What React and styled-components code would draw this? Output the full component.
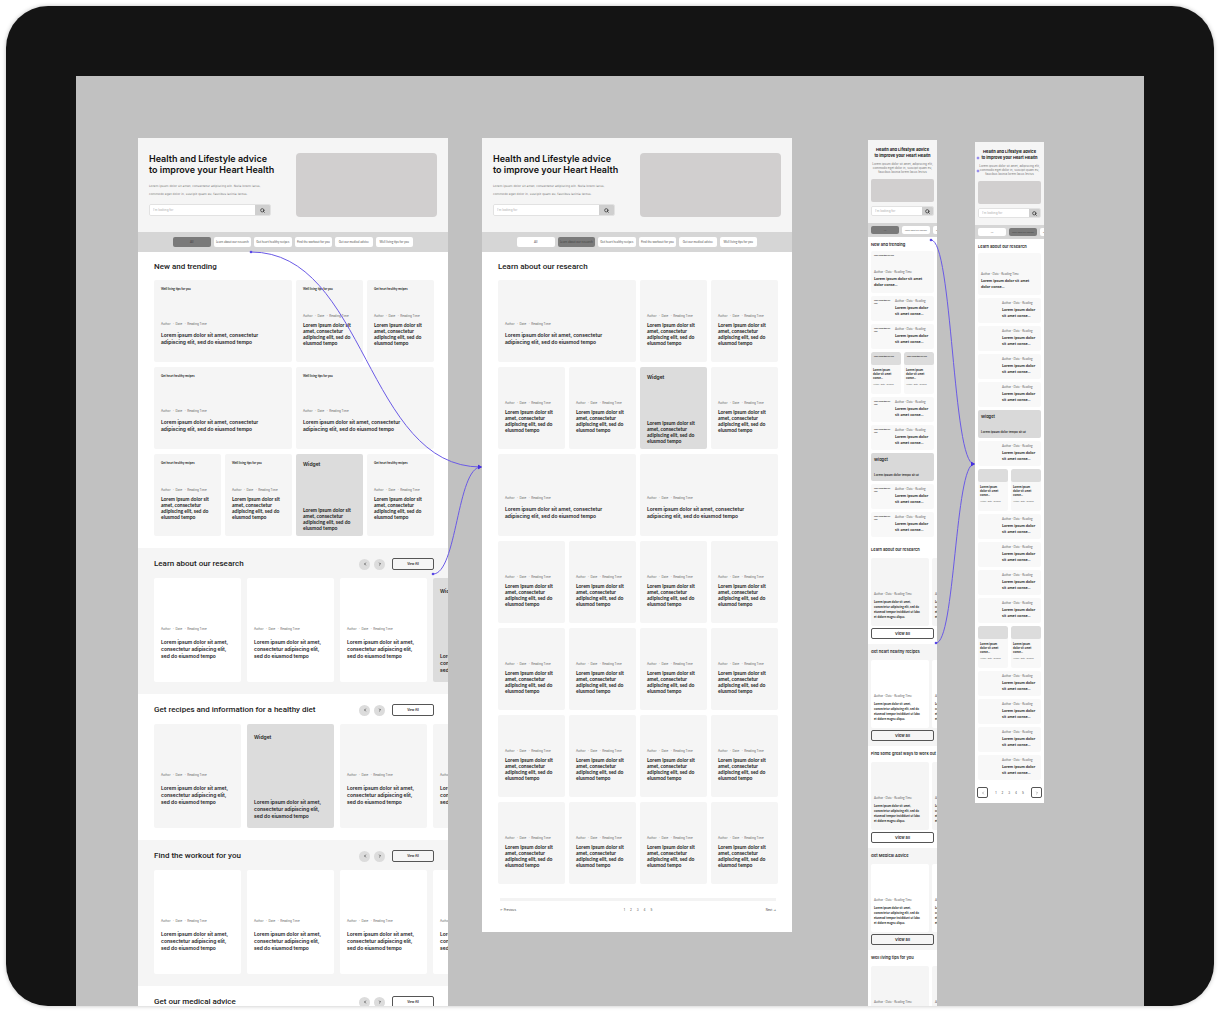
import { Fragment } from 'react'
import styled, { createGlobalStyle } from 'styled-components'
import { Search, ChevronLeft, ChevronRight } from 'lucide-react'

const GlobalStyle = createGlobalStyle`
    * {
        box-sizing: border-box;
    }

    body {
        margin: 0;
        background-color: #ffffff;
        font-family: Inter, "Liberation Sans", sans-serif;
        color: #1b1b1b;
    }

    h1, h2, h3, p {
        margin: 0;
    }

    button, input {
        font-family: inherit;
        color: inherit;
        margin: 0;
        padding: 0;
        border: 0;
    }
`

const Device = styled.div`
    height: calc(100vh - 12px);
    margin: 6px;
    padding: 70px 70px 0;
    background-color: #141414;
    border-radius: 42px;
    box-shadow: 0 0 4px rgba(0, 0, 0, 0.25);
    overflow: hidden;
`

const Canvas = styled.main`
    position: relative;
    height: 100%;
    background-color: #c1c1c1;
    overflow: hidden;
`

const Artboard = styled.article`
    position: absolute;
    left: ${props => props.$x}px;
    top: ${props => props.$y}px;
    width: ${props => props.$mobile ? 69 : 310}px;
    background-color: #ffffff;
    overflow: hidden;
`

const Connectors = styled.svg`
    position: absolute;
    inset: 0;
    width: 100%;
    height: 100%;
    pointer-events: none;
`

/* hero */

const Hero = styled.header`
    display: flex;
    justify-content: space-between;
    align-items: flex-start;
    padding: 15px 11px;
    background-color: #f5f5f5;
`

const MobileHero = styled.header`
    display: flex;
    flex-direction: column;
    padding: 7px 3px;
    text-align: center;
    background-color: #f5f5f5;
`

const HeroTitle = styled.h1`
    font-size: ${props => props.$mobile ? 4 : 9}px;
    line-height: ${props => props.$mobile ? 6 : 11}px;
    font-weight: ${props => props.$mobile ? 700 : 600};
    color: #111111;
    white-space: pre;
`

const HeroText = styled.p`
    margin: ${props => props.$mobile ? '3px 0 5px' : '7px 0 6px'};
    font-family: ${props => props.$mobile ? 'Inter' : '"DejaVu Sans"'}, sans-serif;
    font-size: 3px;
    line-height: ${props => props.$mobile ? 4 : 8}px;
    color: #777777;
    white-space: pre;
`

const HeroImage = styled.div`
    width: ${props => props.$mobile ? 'auto' : '141px'};
    height: ${props => props.$mobile ? 23 : 64}px;
    border-radius: ${props => props.$mobile ? 2 : 4}px;
    background-color: #d1cfcf;
`

const SearchForm = styled.form`
    display: flex;
    width: ${props => props.$mobile ? 'auto' : '122px'};
    height: ${props => props.$mobile ? 10 : 12}px;
    margin-top: ${props => props.$mobile ? 4 : 0}px;
    border: 1px solid #e2e2e2;
    border-radius: 2px;
    overflow: hidden;
`

const SearchInput = styled.input`
    flex: 1;
    min-width: 0;
    padding-left: 3px;
    background-color: #ffffff;
    font-size: 3px;

    &::placeholder {
        color: #aaaaaa;
    }
`

const SearchButton = styled.button`
    display: flex;
    align-items: center;
    justify-content: center;
    width: ${props => props.$mobile ? 11 : 15}px;
    background-color: #cfcfcf;
`

/* tabs */

const TabBar = styled.nav`
    display: flex;
    gap: 3px;
    padding: ${props => props.$mobile ? '3px' : '5px 35px'};
    background-color: #d6d6d6;
`

const Tab = styled.button`
    flex: ${props => props.$mobile ? '0 0 28px' : '1 1 0'};
    min-width: 0;
    height: ${props => props.$mobile ? 8 : 10}px;
    border-radius: 2px;
    background-color: ${props => props.$active ? '#7a7a7a' : '#ffffff'};
    color: ${props => props.$active ? '#444444' : '#555555'};
    font-family: Lato, sans-serif;
    font-size: ${props => props.$mobile ? 2 : 3}px;
    white-space: nowrap;
    overflow: hidden;
`

/* sections */

const Section = styled.section`
    padding: 10px 14px 12px 16px;
    background-color: ${props => props.$shaded ? '#f5f5f5' : '#ffffff'};
`

const MobileSection = styled.section`
    padding: 5px 3px;
    background-color: ${props => props.$shaded ? '#f5f5f5' : '#ffffff'};
`

const SectionHead = styled.div`
    display: flex;
    align-items: center;
    gap: 4px;
    height: 12px;
    margin-bottom: 8px;
`

const SectionTitle = styled.h2`
    flex: 1;
    font-family: ${props => props.$mobile ? 'Inter' : 'Roboto'}, sans-serif;
    font-size: ${props => props.$mobile ? 4 : 8}px;
    line-height: ${props => props.$mobile ? 6 : 10}px;
    font-weight: ${props => props.$mobile ? 600 : 500};
    white-space: nowrap;
`

const RoundButton = styled.button`
    display: flex;
    align-items: center;
    justify-content: center;
    width: 11px;
    height: 11px;
    border-radius: 50%;
    background-color: #dcdcdc;
`

const ViewAll = styled.button`
    display: block;
    width: ${props => props.$mobile ? '100%' : '42px'};
    height: ${props => props.$mobile ? 11 : 12}px;
    margin-left: ${props => props.$mobile ? 0 : 3}px;
    border: 1px solid #555555;
    border-radius: 2px;
    background-color: transparent;
    font-size: ${props => props.$mobile ? 4 : 3}px;
    font-weight: 600;
`

const Grid = styled.div`
    display: grid;
    grid-template-columns: repeat(4, 1fr);
    grid-auto-rows: 82px;
    gap: 5px 4px;
    margin-top: 8px;
`

const Track = styled.div`
    display: flex;
    gap: ${props => props.$mobile ? 3 : 6}px;
    margin: ${props => props.$mobile ? '5px -3px 2px 0' : '0 -14px 0 0'};
    overflow: hidden;
`

/* cards */

const Card = styled.article`
    display: flex;
    flex-direction: column;
    grid-column: span ${props => props.$wide ? 2 : 1};
    padding: 7px 7px ${props => props.$widget ? 5 : 16}px;
    border-radius: 2px;
    background-color: ${props => props.$widget ? '#dcdcdc' : '#f5f5f5'};
    overflow: hidden;
`

const Slide = styled.article`
    display: flex;
    flex: 0 0 87px;
    flex-direction: column;
    height: 104px;
    padding: 10px 7px ${props => props.$widget ? 8 : 22}px;
    border-radius: 2px;
    background-color: ${props => props.$widget ? '#dcdcdc' : props.$white ? '#ffffff' : '#f5f5f5'};
`

const Label = styled.p`
    font-family: Lato, sans-serif;
    font-size: 3px;
    line-height: 5px;
    font-weight: 700;
    white-space: pre;
`

const WidgetTitle = styled.h3`
    font-size: ${props => props.$mobile ? 4 : 5}px;
    line-height: 6px;
    font-weight: 600;
`

const Meta = styled.p`
    margin-top: auto;
    font-size: 3px;
    line-height: 5px;
    color: #666666;
    white-space: pre;
`

const CardText = styled.p`
    margin-top: ${props => props.$pushed ? 'auto' : props.$gap + 'px'};
    font-family: ${props => props.$small ? 'Lato' : 'Inter'}, sans-serif;
    font-size: 5px;
    line-height: ${props => props.$small ? 6 : 7}px;
    font-weight: ${props => props.$small ? 700 : 600};
    white-space: pre;
`

/* mobile cards */

const Stack = styled.div`
    display: flex;
    flex-direction: column;
    gap: 3px;
    margin-top: 3px;
`

const MobileCard = styled.article`
    height: 42px;
    padding: 3px;
    border-radius: 2px;
    background-color: #f8f8f8;
`

const MobileLabel = styled(Label)`
    height: ${props => props.$tall ? 16 : 6}px;
    padding-right: 2px;
    font-size: 2px;
    line-height: 3px;
    white-space: normal;
`

const MobileRow = styled.article`
    display: grid;
    grid-template-columns: 21px 1fr;
    height: 25px;
    padding: 3px;
    border-radius: 2px;
    background-color: #f8f8f8;
`

const MobileText = styled.p`
    margin-top: 2px;
    font-family: Lato, sans-serif;
    font-size: 4px;
    line-height: 6px;
    font-weight: 700;
    white-space: pre;
`

const MobileMeta = styled(Meta)`
    margin-top: 0;
    font-family: Lato, sans-serif;
    line-height: 4px;
`

const MobileWidget = styled.article`
    display: flex;
    flex-direction: column;
    justify-content: space-between;
    height: 28px;
    padding: 4px 3px;
    border-radius: 2px;
    background-color: #d9d9d9;
`

const WidgetText = styled.p`
    font-family: Inter, sans-serif;
    font-size: 3px;
    line-height: 4px;
    font-weight: 600;
    white-space: nowrap;
`

const Pair = styled.div`
    display: grid;
    grid-template-columns: 1fr 1fr;
    gap: 3px;
    height: 42px;
`

const Thumb = styled.div`
    height: 13px;
    margin-bottom: 3px;
    padding: 3px;
    border-radius: 2px;
    background-color: #dcdcdc;
`

const PairCard = styled.article`
    background-color: #f8f8f8;
    border-radius: 2px;
    overflow: hidden;
`

const SmallText = styled.p`
    padding-left: 2px;
    font-family: Lato, sans-serif;
    font-size: 3px;
    line-height: ${props => props.$slide ? 5 : 4}px;
    font-weight: 700;
    white-space: pre;
`

const PairMeta = styled(SmallText)`
    margin-top: 2px;
    font-size: 2px;
    font-weight: 400;
    color: #666666;
`

const MobileSlide = styled.article`
    flex: 0 0 58px;
    height: 68px;
    padding: 34px 1px 0;
    border-radius: 2px;
    background-color: ${props => props.$white ? '#ffffff' : '#f5f5f5'};

    ${MobileMeta} {
        padding-left: 2px;
        margin-bottom: 4px;
    }
`

/* pagination */

const Pager = styled.nav`
    display: grid;
    grid-template-columns: 1fr auto 1fr;
    margin: 14px 2px 6px;
    padding-top: 5px;
    border-top: 3px solid #f3f3f3;
    font-size: 3px;
    line-height: 8px;
`

const MobilePager = styled.nav`
    display: flex;
    align-items: center;
    justify-content: space-between;
    margin: 4px -1px 0;
    font-size: 3px;
`

const Pages = styled.div`
    display: flex;
    gap: 5px;
`

const PageLink = styled.a`
    color: #444444;
    text-align: ${props => props.$end ? 'right' : 'left'};
    text-decoration: none;
`

const SquareButton = styled.button`
    display: flex;
    align-items: center;
    justify-content: center;
    width: 11px;
    height: 11px;
    border: 1px solid #555555;
    border-radius: 2px;
    background-color: #ffffff;
`

const META = 'Author   ·  Date   ·  Reading Time'
const WIDE_TEXT = 'Lorem ipsum dolor sit amet, consectetur\nadipiscing elit, sed do eiusmod tempo'
const SMALL_TEXT = 'Lorem ipsum dolor sit\namet, consectetur\nadipiscing elit, sed do\neiusmod tempo'
const SLIDE_TEXT = 'Lorem ipsum dolor sit amet,\nconsectetur adipiscing elit,\nsed do eiusmod tempo'
const TIPS = 'Well living tips for you'
const RECIPES = 'Get heart healthy recipes'

const TABS = [
    'All',
    'Learn about our research',
    'Get heart healthy recipes',
    'Find the workout for you',
    'Get our medical advice',
    'Well living tips for you',
]

const TRENDING = [
    { wide: true, label: TIPS },
    { label: TIPS },
    { label: RECIPES },
    { wide: true, label: RECIPES },
    { wide: true, label: TIPS },
    { label: RECIPES },
    { label: TIPS },
    { widget: true },
    { label: RECIPES },
]

const RESEARCH = [
    { wide: true }, {}, {},
    {}, {}, { widget: true }, {},
    { wide: true }, { wide: true },
    ...Array.from({ length: 16 }, () => ({})),
]

const CAROUSELS = [
    { title: 'Learn about our research', shaded: true, widget: 3 },
    { title: 'Get recipes and information for a healthy diet', widget: 1 },
    { title: 'Find the workout for you', shaded: true },
    { title: 'Get our medical advice' },
]

const MOBILE_CAROUSELS = [
    { title: 'Learn about our research' },
    { title: 'Get heart healthy recipes', shaded: true },
    { title: 'Find some great ways to work out' },
    { title: 'Get Medical Advice', shaded: true },
    { title: 'Well living tips for you' },
]

const MOBILE_TRENDING = ['row', 'row', 'pair', 'row', 'row', 'widget', 'row', 'row']
const MOBILE_RESEARCH = [
    'row', 'row', 'row', 'row', 'widget', 'row', 'pair',
    'row', 'row', 'row', 'row', 'pair', 'row', 'row', 'row', 'row',
]

const SearchBox = ({ mobile }) => (
    <SearchForm $mobile={mobile} onSubmit={e => e.preventDefault()}>
        <SearchInput type="text" placeholder="I'm looking for" aria-label="Search" />
        <SearchButton $mobile={mobile} type="submit" aria-label="Search">
            <Search size={5} strokeWidth={3} />
        </SearchButton>
    </SearchForm>
)

const DesktopHero = () => (
    <Hero>
        <div>
            <HeroTitle>{'Health and Lifestyle advice\nto improve your Heart Health'}</HeroTitle>
            <HeroText>
                {'Lorem ipsum dolor sit amet, consectetur adipiscing elit. Nulla lorem lacus,\ncommodo eget dolor in, suscipit quam eu, faucibus lacinia lectus.'}
            </HeroText>
            <SearchBox />
        </div>
        <HeroImage />
    </Hero>
)

const PhoneHero = () => (
    <MobileHero>
        <HeroTitle $mobile>{'Health and Lifestyle advice\nto improve your Heart Health'}</HeroTitle>
        <HeroText $mobile>
            {'Lorem ipsum dolor sit amet, adipiscing elit,\ncommodo eget dolor in, suscipit quam eu,\nfaucibus lacinia lorem lacus lectus'}
        </HeroText>
        <HeroImage $mobile />
        <SearchBox mobile />
    </MobileHero>
)

const Tabs = ({ active, mobile }) => (
    <TabBar $mobile={mobile}>
        {TABS.slice(0, mobile ? 3 : 6).map((name, i) => (
            <Tab key={name} type="button" $mobile={mobile} $active={i === active}>{name}</Tab>
        ))}
    </TabBar>
)

const CardGrid = ({ cards }) => (
    <Grid>
        {cards.map((card, i) => (
            <Card key={i} $wide={card.wide} $widget={card.widget}>
                {card.widget && <WidgetTitle>Widget</WidgetTitle>}
                {card.label && <Label>{card.label}</Label>}
                {!card.widget && <Meta>{META}</Meta>}
                <CardText $small={!card.wide} $pushed={card.widget} $gap={card.wide ? 5 : 3}>
                    {card.wide ? WIDE_TEXT : SMALL_TEXT}
                </CardText>
            </Card>
        ))}
    </Grid>
)

const Carousel = ({ title, shaded, widget }) => (
    <Section $shaded={shaded}>
        <SectionHead>
            <SectionTitle>{title}</SectionTitle>
            <RoundButton type="button" aria-label="Previous"><ChevronLeft size={4} strokeWidth={4} /></RoundButton>
            <RoundButton type="button" aria-label="Next"><ChevronRight size={4} strokeWidth={4} /></RoundButton>
            <ViewAll type="button">View All</ViewAll>
        </SectionHead>
        <Track>
            {[0, 1, 2, 3].map(i => (
                <Slide key={i} $white={shaded} $widget={i === widget}>
                    {i === widget ? <WidgetTitle>Widget</WidgetTitle> : <Meta>{META}</Meta>}
                    <CardText $pushed={i === widget} $gap={7}>{SLIDE_TEXT}</CardText>
                </Slide>
            ))}
        </Track>
    </Section>
)

const MobileItem = ({ kind, label }) => {
    if (kind === 'widget') {
        return (
            <MobileWidget>
                <WidgetTitle $mobile>Widget</WidgetTitle>
                <WidgetText>Lorem ipsum dolor tempo sit ut</WidgetText>
            </MobileWidget>
        )
    }
    if (kind === 'pair') {
        return (
            <Pair>
                {[0, 1].map(i => (
                    <PairCard key={i}>
                        <Thumb>{label && <MobileLabel>{TIPS}</MobileLabel>}</Thumb>
                        <SmallText>{'Lorem ipsum\ndolor sit amet\nconse...'}</SmallText>
                        <PairMeta>Author · Date · Reading</PairMeta>
                    </PairCard>
                ))}
            </Pair>
        )
    }
    return (
        <MobileRow>
            <div>{label && <MobileLabel>{TIPS}</MobileLabel>}</div>
            <div>
                <MobileMeta>Author · Date · Reading</MobileMeta>
                <MobileText>{'Lorem ipsum dolor\nsit amet conse...'}</MobileText>
            </div>
        </MobileRow>
    )
}

const MobileList = ({ title, items, label, children }) => (
    <MobileSection>
        <SectionTitle $mobile>{title}</SectionTitle>
        <Stack>
            <MobileCard>
                <MobileLabel $tall>{label ? TIPS : ''}</MobileLabel>
                <MobileMeta>Author · Date · Reading Time</MobileMeta>
                <MobileText>{'Lorem ipsum dolor sit amet\ndolor conse...'}</MobileText>
            </MobileCard>
            {items.map((kind, i) => <MobileItem key={i} kind={kind} label={label} />)}
            {children}
        </Stack>
    </MobileSection>
)

const MobileCarousel = ({ title, shaded }) => (
    <MobileSection $shaded={shaded}>
        <SectionTitle $mobile>{title}</SectionTitle>
        <Track $mobile>
            {[0, 1].map(i => (
                <MobileSlide key={i} $white={shaded}>
                    <MobileMeta>Author · Date · Reading Time</MobileMeta>
                    <SmallText $slide>
                        {'Lorem ipsum dolor sit amet,\nconsectetur adipiscing elit, sed do\neiusmod tempor incididunt ut labo\net dolore magna aliqua.'}
                    </SmallText>
                </MobileSlide>
            ))}
        </Track>
        <ViewAll $mobile type="button">View all</ViewAll>
    </MobileSection>
)

const PageNumbers = () => (
    <Pages>
        {[1, 2, 3, 4, 5].map(n => <PageLink key={n} href="#">{n}</PageLink>)}
    </Pages>
)

const CURVES = [
    { from: [175, 176], to: [405, 391] },
    { from: [357, 498], to: [405, 391] },
    { from: [855, 164], to: [898, 388] },
    { from: [860, 567], to: [898, 388] },
]

const Wires = () => (
    <Connectors aria-hidden="true">
        {CURVES.map(({ from: [x1, y1], to: [x2, y2] }, i) => {
            const mid = (x1 + x2) / 2
            return (
                <Fragment key={i}>
                    <path
                        d={`M${x1} ${y1}C${mid} ${y1} ${mid} ${y2} ${x2} ${y2}`}
                        fill="none"
                        stroke="#6a5ae6"
                        strokeWidth="1"
                    />
                    <circle cx={x1} cy={y1} r="1.3" fill="#5a48e6" />
                    <path d={`M${x2 - 3} ${y2 - 2.2}L${x2 + 1} ${y2}L${x2 - 3} ${y2 + 2.2}Z`} fill="#4630e0" />
                </Fragment>
            )
        })}
        <circle cx="902" cy="82" r="1" fill="#b9b2f5" stroke="#6a5ae6" strokeWidth="0.6" />
        <circle cx="902" cy="95" r="1" fill="#b9b2f5" stroke="#6a5ae6" strokeWidth="0.6" />
    </Connectors>
)

const App = () => {
    return (
        <>
            <GlobalStyle />
            <Device>
                <Canvas>
                    <Artboard $x={62} $y={62}>
                        <DesktopHero />
                        <Tabs active={0} />
                        <Section>
                            <SectionTitle>New and trending</SectionTitle>
                            <CardGrid cards={TRENDING} />
                        </Section>
                        {CAROUSELS.map(item => <Carousel key={item.title} {...item} />)}
                    </Artboard>
                    <Artboard $x={406} $y={62}>
                        <DesktopHero />
                        <Tabs active={1} />
                        <Section>
                            <SectionTitle>Learn about our research</SectionTitle>
                            <CardGrid cards={RESEARCH} />
                            <Pager>
                                <PageLink href="#">← Previous</PageLink>
                                <PageNumbers />
                                <PageLink $end href="#">Next →</PageLink>
                            </Pager>
                        </Section>
                    </Artboard>
                    <Artboard $mobile $x={792} $y={64}>
                        <PhoneHero />
                        <Tabs mobile active={0} />
                        <MobileList title="New and trending" items={MOBILE_TRENDING} label />
                        {MOBILE_CAROUSELS.map(item => <MobileCarousel key={item.title} {...item} />)}
                    </Artboard>
                    <Artboard $mobile $x={899} $y={66}>
                        <PhoneHero />
                        <Tabs mobile active={1} />
                        <MobileList title="Learn about our research" items={MOBILE_RESEARCH}>
                            <MobilePager>
                                <SquareButton type="button" aria-label="Previous"><ChevronLeft size={4} /></SquareButton>
                                <PageNumbers />
                                <SquareButton type="button" aria-label="Next"><ChevronRight size={4} /></SquareButton>
                            </MobilePager>
                        </MobileList>
                    </Artboard>
                    <Wires />
                </Canvas>
            </Device>
        </>
    )
}

export default App
